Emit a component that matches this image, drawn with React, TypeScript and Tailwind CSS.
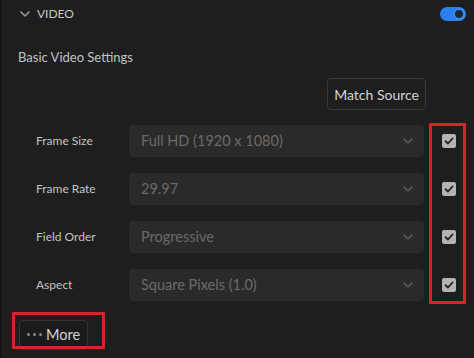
import React from "react";

const rows = [
  { label: "Frame Size", value: "Full HD (1920 x 1080)" },
  { label: "Frame Rate", value: "29.97" },
  { label: "Field Order", value: "Progressive" },
  { label: "Aspect", value: "Square Pixels (1.0)" },
];

function Chevron({ className }: { className?: string }) {
  return (
    <svg width="10" height="6" viewBox="0 0 10 6" className={className}>
      <path d="M1 1 L5 5 L9 1" fill="none" stroke="currentColor" strokeWidth="1.6" strokeLinecap="round" strokeLinejoin="round" />
    </svg>
  );
}

function Check() {
  return (
    <div className="w-[14px] h-[14px] rounded-[2px] bg-[#b3b3b3] flex items-center justify-center">
      <svg width="10" height="8" viewBox="0 0 10 8">
        <path d="M1.5 4.2 L4 6.5 L8.5 1.5" fill="none" stroke="#1e1e1e" strokeWidth="1.8" strokeLinecap="round" strokeLinejoin="round" />
      </svg>
    </div>
  );
}

export default function App() {
  return (
    <div
      className="relative w-[474px] h-[358px] bg-[#1e1e1e] border-l-2 border-[#151515] overflow-hidden"
      style={{ fontFamily: "Lato, 'Noto Sans', sans-serif" }}
    >
      {/* header */}
      <div className="flex items-center h-[27px] pl-[18px] pr-[8px]">
        <Chevron className="text-[#9a9a9a]" />
        <span className="ml-[7px] text-[12px] text-[#c6c6c6]">VIDEO</span>
        <div className="ml-auto w-[26px] h-[14px] rounded-full bg-[#2d7ff0] flex items-center justify-end pr-[1px]">
          <div className="w-[12px] h-[12px] rounded-full bg-[#1b2838] border-2 border-[#3b8cf5]" />
        </div>
      </div>

      <div className="pl-[16px] mt-[20px] text-[13px] text-[#c2c2c2] leading-[20px]">Basic Video Settings</div>

      <div className="flex justify-end pr-[48px] mt-[11px]">
        <div className="h-[32px] px-[6px] flex items-center rounded-[4px] border border-[#383838] bg-[#1e1e1e] text-[14px] text-[#d4d4d4]">
          Match Source
        </div>
      </div>

      <div className="flex flex-col gap-[16px] mt-[15px]">
        {rows.map((r) => (
          <div key={r.label} className="flex items-center h-[32px]">
            <div className="w-[127px] pl-[34px] text-[12px] text-[#c4c4c4]">{r.label}</div>
            <div className="w-[295px] h-[32px] rounded-[4px] bg-[#2a2a2a] flex items-center pl-[12px] pr-[11px]">
              <span className="text-[14.5px] text-[#6a6a6a]">{r.value}</span>
              <Chevron className="ml-auto text-[#5c5c5c]" />
            </div>
            <div className="ml-[18px]">
              <Check />
            </div>
          </div>
        ))}
      </div>

      <div className="mt-[17px] pl-[17px]">
        <div className="inline-flex items-center h-[30px] px-[7px] rounded-[4px] border border-[#333333] bg-[#1b1b1b] text-[14.5px] text-[#d4d4d4]">
          <span className="flex gap-[3px] mr-[4px]">
            <span className="w-[3px] h-[3px] rounded-full bg-[#8a8a8a]" />
            <span className="w-[3px] h-[3px] rounded-full bg-[#8a8a8a]" />
            <span className="w-[3px] h-[3px] rounded-full bg-[#8a8a8a]" />
          </span>
          More
        </div>
      </div>

      {/* annotation overlays */}
      <div className="absolute left-[427px] top-[123px] w-[37px] h-[181px] border-[3px] border-[#d9232b] rounded-[1px]" />
      <div className="absolute left-[10px] top-[312px] w-[93px] h-[37px] border-[3px] border-[#d9232b] rounded-[1px]" />
    </div>
  );
}
